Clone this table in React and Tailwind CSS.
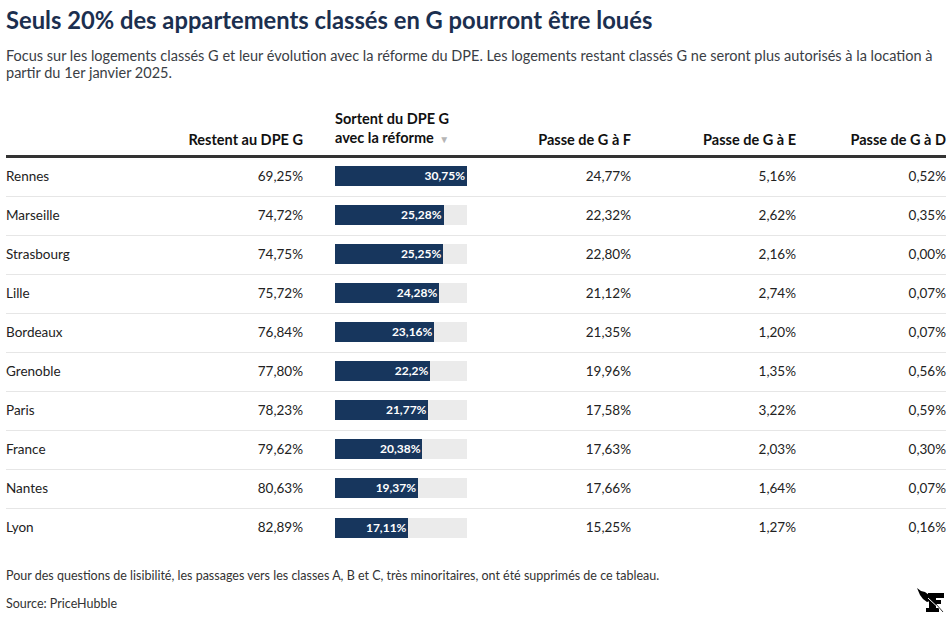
import React from "react";

const ROWS = [
    ["Rennes", "69,25%", 30.75, "24,77%", "5,16%", "0,52%"],
    ["Marseille", "74,72%", 25.28, "22,32%", "2,62%", "0,35%"],
    ["Strasbourg", "74,75%", 25.25, "22,80%", "2,16%", "0,00%"],
    ["Lille", "75,72%", 24.28, "21,12%", "2,74%", "0,07%"],
    ["Bordeaux", "76,84%", 23.16, "21,35%", "1,20%", "0,07%"],
    ["Grenoble", "77,80%", 22.2, "19,96%", "1,35%", "0,56%"],
    ["Paris", "78,23%", 21.77, "17,58%", "3,22%", "0,59%"],
    ["France", "79,62%", 20.38, "17,63%", "2,03%", "0,30%"],
    ["Nantes", "80,63%", 19.37, "17,66%", "1,64%", "0,07%"],
    ["Lyon", "82,89%", 17.11, "15,25%", "1,27%", "0,16%"],
];

const MAX = 30.75;
const cols = "grid grid-cols-[120px_177px_164px_164px_165px_150px]";

function Logo() {
    return (
        <svg width="30" height="26" viewBox="0 0 30 26" className="shrink-0">
            <path d="M1 1 L5 4 L9 5 L13 8 L14 14 L11 15 L7 12 L4 8 Z" fill="#000" />
            <rect x="12" y="6" width="16" height="5" fill="#000" />
            <rect x="13" y="6" width="7" height="19" fill="#000" />
            <rect x="13" y="13" width="12" height="4" fill="#000" />
            <rect x="10" y="21" width="13" height="4" fill="#000" />
            <line x1="12" y1="11" x2="27" y2="25" stroke="#fff" strokeWidth="1" />
            <line x1="20" y1="17" x2="27" y2="25" stroke="#000" strokeWidth="0.8" />
        </svg>
    );
}

export default function App() {
    return (
        <div className="w-[952px] h-[622px] overflow-hidden bg-white px-[6px] font-['Lato','Noto_Sans',sans-serif]">
            <h1 className="pt-[5px] text-[23.75px] leading-[30px] font-bold text-[#1b2f4f]">
                Seuls 20% des appartements classés en G pourront être loués
            </h1>
            <p className="mt-[12px] w-[940px] text-[14.5px] leading-[17px] text-[#3a3e45]">
                Focus sur les logements classés G et leur évolution avec la réforme du DPE. Les logements restant classés G ne seront plus autorisés à la location à partir du 1er janvier 2025.
            </p>

            <div className="mt-[28px] w-[940px]">
                <div className={`${cols} items-end pb-[6px] border-b-[3px] border-[#333] text-[14.5px] leading-[19px] font-bold text-[#111]`}>
                    <div />
                    <div className="text-right">Restent au DPE G</div>
                    <div className="pl-[32px]">
                        Sortent du DPE G<br />
                        avec la réforme <span className="text-[10px] text-[#b5b5b5] ml-[2px]">▼</span>
                    </div>
                    <div className="text-right">Passe de G à F</div>
                    <div className="text-right">Passe de G à E</div>
                    <div className="text-right">Passe de G à D</div>
                </div>

                {ROWS.map((r, i) => (
                    <div key={r[0]} className={`${cols} h-[39px] items-center pb-[2px] text-[13.5px] text-[#222] ${i < ROWS.length - 1 ? "border-b border-[#e6e6e6]" : ""}`}>
                        <div>{r[0]}</div>
                        <div className="text-right">{r[1]}</div>
                        <div className="pl-[32px]">
                            <div className="h-[20px] w-[132px] bg-[#ebebeb]">
                                <div className="h-full bg-[#17365d] flex items-center justify-end pr-[2px] text-[12px] font-bold text-white" style={{ width: `${(r[2] / MAX) * 100}%` }}>
                                    {String(r[2]).replace(".", ",")}%
                                </div>
                            </div>
                        </div>
                        <div className="text-right">{r[3]}</div>
                        <div className="text-right">{r[4]}</div>
                        <div className="text-right">{r[5]}</div>
                    </div>
                ))}
            </div>

            <div className="mt-[19px] flex items-end justify-between w-[940px] text-[12.5px] leading-[18px] text-[#333]">
                <div>
                    <p>Pour des questions de lisibilité, les passages vers les classes A, B et C, très minoritaires, ont été supprimés de ce tableau.</p>
                    <p className="mt-[10px]">Source: PriceHubble</p>
                </div>
                <Logo />
            </div>
        </div>
    );
}
